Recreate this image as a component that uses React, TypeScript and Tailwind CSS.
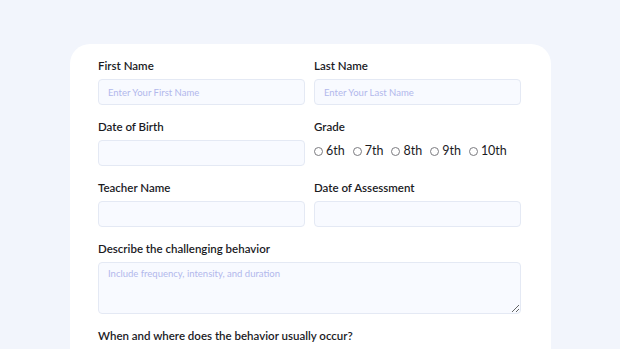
import React from 'react'

const font = { fontFamily: 'Lato, "Noto Sans", sans-serif' }

const inputCls =
  'block h-[26px] w-full rounded-[4px] border border-[#e4e9f4] bg-[#f8faff] px-[9px] text-[9.5px] text-slate-700 outline-none placeholder:text-[#b2b8ec]'

const Label: React.FC<{ children: React.ReactNode }> = ({ children }) => (
  <label className="mb-[6px] block text-[11.5px] font-semibold leading-[15px] text-[#1b1b1f]">{children}</label>
)

const grades = ['6th', '7th', '8th', '9th', '10th']

const App: React.FC = () => {
  return (
    <div className="min-h-[349px] bg-[#f2f5fc] pt-[44px]" style={font}>
      <div className="ml-[70px] w-[481px] rounded-t-[20px] bg-white pl-[28px] pr-[30px] pt-[14px] pb-6">
        <div className="grid grid-cols-2 gap-x-[9px] gap-y-[14px]">
          <div>
            <Label>First Name</Label>
            <input className={inputCls} placeholder="Enter Your First Name" />
          </div>
          <div>
            <Label>Last Name</Label>
            <input className={inputCls} placeholder="Enter Your Last Name" />
          </div>
          <div>
            <Label>Date of Birth</Label>
            <input className={inputCls} />
          </div>
          <div>
            <Label>Grade</Label>
            <div className="flex h-[22px] items-center gap-[8px]">
              {grades.map(g => (
                <span key={g} className="flex items-center gap-[3px] text-[12.5px] text-[#1b1b1f]">
                  <span className="h-[9px] w-[9px] rounded-full border border-[#7b7b80] bg-white" />
                  {g}
                </span>
              ))}
            </div>
          </div>
          <div>
            <Label>Teacher Name</Label>
            <input className={inputCls} />
          </div>
          <div>
            <Label>Date of Assessment</Label>
            <input className={inputCls} />
          </div>
          <div className="col-span-2">
            <Label>Describe the challenging behavior</Label>
            <textarea
              className="block h-[52px] w-full rounded-[4px] border border-[#e4e9f4] bg-[#f8faff] px-[9px] py-[4px] text-[9.5px] text-slate-700 outline-none placeholder:text-[#b2b8ec]"
              placeholder="Include frequency, intensity, and duration"
            />
          </div>
          <div className="col-span-2">
            <Label>When and where does the behavior usually occur?</Label>
            <input className={inputCls} />
          </div>
        </div>
      </div>
    </div>
  )
}

export default App
